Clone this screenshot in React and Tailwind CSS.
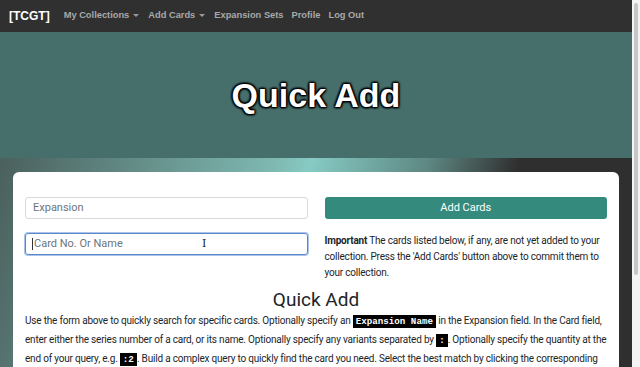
import React from 'react';

function Caret() {
  return <span className="ml-[4px] inline-block h-0 w-0 border-x-[3px] border-t-[3px] border-x-transparent border-t-[#9a9a9a] align-middle" />;
}

function Code({ children }) {
  return (
    <code className="bg-black px-[3px] py-[1px] font-['Liberation_Mono',monospace] text-[9.2px] font-bold tracking-normal text-white">{children}</code>
  );
}

export default function App() {
  return (
    <div className="flex h-[367px] w-[640px] overflow-hidden font-['Roboto',sans-serif]">
      <div className="flex w-[632px] flex-col bg-[#2f2f2f]">
        <nav className="flex h-8 shrink-0 items-center bg-[#303030] px-[9px]">
          <span className="mr-[14px] font-['Liberation_Sans',sans-serif] text-[12px] font-bold text-white">[TCGT]</span>
          <div className="flex gap-[8px] font-['Liberation_Sans',sans-serif] text-[9.3px] font-bold text-[#a9a9a9]">
            <span className="mr-[1px]">My Collections<Caret /></span>
            <span className="mr-[1px]">Add Cards<Caret /></span>
            <span>Expansion Sets</span>
            <span>Profile</span>
            <span>Log Out</span>
          </div>
        </nav>

        <header className="flex h-[126px] shrink-0 items-center justify-center bg-[#466f6b]">
          <h1 className="font-['Liberation_Sans',sans-serif] text-[34px] font-bold text-white [text-shadow:0_0_2px_#000,0_0_3px_#000,1px_1px_2px_#000,-1px_-1px_2px_#000,1px_-1px_2px_#000,-1px_1px_2px_#000]">
            Quick Add
          </h1>
        </header>

        <main className="flex-1 bg-[linear-gradient(105deg,#4a605d_0%,#7fb9b2_40%,#86cbc4_45%,#5e8782_62%,#2f2f2f_75%)] px-[13px] pt-[14px]">
          <div className="h-full rounded-t-[6px] bg-white px-[12px] pt-[25px] text-[#212529]">
            <div className="grid grid-cols-2 gap-x-[17px]">
              <div className="flex flex-col gap-[14px]">
                <div className="flex h-[22px] items-center rounded-[3px] border border-[#d7dadd] px-[7px] text-[11px] text-[#6c757d]">Expansion</div>
                <div className="relative flex h-[22px] items-center rounded-[3px] border border-[#5b87c9] px-[6px] text-[11px] text-[#6c757d] shadow-[0_0_0_1px_#a9c3ea]">
                  <span className="mr-[1px] h-[12px] w-px bg-[#333]" />
                  Card No. Or Name
                  <span className="absolute left-[176px] top-[4px] font-['DejaVu_Serif',serif] text-[11px] leading-none text-[#222]">I</span>
                </div>
              </div>
              <div className="flex flex-col">
                <button className="h-[22px] rounded-[3px] bg-[#358a7e] text-[11px] text-white">Add Cards</button>
                <p className="mt-[14px] text-[10px] leading-[16px] tracking-[-0.2px]">
                  <b>Important</b> The cards listed below, if any, are not yet added to your collection. Press the 'Add Cards' button above to commit them to your collection.
                </p>
              </div>
            </div>
            <h2 className="mt-[7px] text-center text-[19px] leading-[24px]">Quick Add</h2>
            <p className="text-[10px] leading-[18px] tracking-[-0.2px]">
              Use the form above to quickly search for specific cards. Optionally specify an <Code>Expansion Name</Code> in the Expansion field. In the Card field, enter either the series number of a card, or its name. Optionally specify any variants separated by <Code>:</Code>. Optionally specify the quantity at the end of your query, e.g. <Code>:2</Code>. Build a complex query to quickly find the card you need. Select the best match by clicking the corresponding result.
            </p>
          </div>
        </main>
      </div>
      <div className="flex w-2 flex-col bg-[#f4f4f4] px-[2px] pt-[3px]">
        <div className="h-[272px] rounded-full bg-[#c6c6c6]" />
      </div>
    </div>
  );
}
